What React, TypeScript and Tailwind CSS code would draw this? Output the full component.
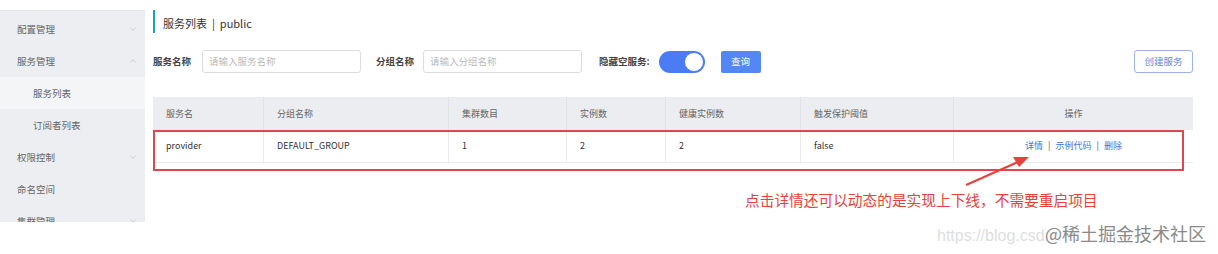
import React from "react";
import { ChevronDown, ChevronUp } from "lucide-react";

const font = { fontFamily: '"Noto Sans CJK SC", "Liberation Sans", sans-serif' };

const menu = [
    { label: "配置管理", icon: "down" },
    { label: "服务管理", icon: "up" },
    { label: "服务列表", sub: true, active: true },
    { label: "订阅者列表", sub: true },
    { label: "权限控制", icon: "down" },
    { label: "命名空间" },
    { label: "集群管理", icon: "down" },
];

const columns = [
    { title: "服务名", w: "w-[111px]" },
    { title: "分组名称", w: "w-[185px]" },
    { title: "集群数目", w: "w-[118px]" },
    { title: "实例数", w: "w-[99px]" },
    { title: "健康实例数", w: "w-[135px]" },
    { title: "触发保护阈值", w: "w-[153px]" },
];

const row = ["provider", "DEFAULT_GROUP", "1", "2", "2", "false"];

const App = () => {
    return (
        <div className="relative w-[1218px] h-[254px] bg-white flex overflow-hidden text-[#333]" style={font}>
            {/* Sidebar */}
            <aside className="w-[145px] mt-[10px] h-[212px] bg-[#eceef1] border-t border-[#e2e4e8] pt-[2px] overflow-hidden shrink-0">
                {menu.map((m) => (
                    <div
                        key={m.label}
                        className={`h-[32px] flex items-center justify-between text-[9.5px] text-[#666] pr-[7px] ${m.sub ? "pl-[33px]" : "pl-[17px]"} ${m.active ? "bg-[#f4f5f7]" : ""}`}
                    >
                        <span>{m.label}</span>
                        {m.icon === "down" && <ChevronDown size={10} strokeWidth={1.2} className="text-[#aaa]" />}
                        {m.icon === "up" && <ChevronUp size={10} strokeWidth={1.2} className="text-[#aaa]" />}
                    </div>
                ))}
            </aside>

            {/* Main */}
            <main className="flex-1 pl-[8px] pr-[25px] pt-[10px]">
                <div className="flex items-center h-[23px]">
                    <div className="w-[2px] h-[23px] bg-[#1e9bd0]" />
                    <span className="ml-[8px] text-[11px] text-[#333] mt-[3px]">服务列表 &nbsp;|&nbsp; public</span>
                </div>

                {/* Search bar */}
                <div className="flex items-center mt-[17px] h-[23px]">
                    <span className="text-[9.5px] font-bold text-[#444]">服务名称</span>
                    <div className="ml-[11px] w-[159px] h-[23px] border border-[#dcdcdc] rounded-[3px] flex items-center px-[6px] text-[9.5px] text-[#bbb]">
                        请输入服务名称
                    </div>
                    <span className="ml-[15px] text-[9.5px] font-bold text-[#444]">分组名称</span>
                    <div className="ml-[9px] w-[159px] h-[23px] border border-[#dcdcdc] rounded-[3px] flex items-center px-[6px] text-[9.5px] text-[#bbb]">
                        请输入分组名称
                    </div>
                    <span className="ml-[17px] text-[9.5px] font-bold text-[#444]">隐藏空服务:</span>
                    <div className="ml-[9px] w-[46px] h-[22px] rounded-full bg-[#4a7cf5] flex items-center justify-end pr-[1px]">
                        <div className="w-[20px] h-[20px] rounded-full bg-white border border-[#4a7cf5]" />
                    </div>
                    <div className="ml-[16px] w-[40px] h-[22px] rounded-[2px] bg-[#5287f5] text-white text-[9.5px] flex items-center justify-center">
                        查询
                    </div>
                    <div className="ml-auto w-[59px] h-[23px] rounded-[3px] border border-[#9db2ef] text-[#6a88d8] text-[9.5px] flex items-center justify-center">
                        创建服务
                    </div>
                </div>

                {/* Table */}
                <div className="relative mt-[24px] w-[1040px]">
                    <div className="flex h-[33px] bg-[#ebedf0] text-[9px] text-[#666]">
                        {columns.map((c) => (
                            <div key={c.title} className={`${c.w} flex items-center px-[13px] border-r border-[#e0e2e6]`}>
                                {c.title}
                            </div>
                        ))}
                        <div className="w-[239px] flex items-center justify-center">操作</div>
                    </div>
                    <div className="flex h-[33px] bg-white text-[9px] text-[#333] border-b border-[#ebebeb]">
                        {columns.map((c, i) => (
                            <div key={c.title} className={`${c.w} flex items-center px-[13px] border-r border-[#ebebeb]`}>
                                {row[i]}
                            </div>
                        ))}
                        <div className="w-[239px] flex items-center justify-center text-[#3b78d8]">
                            <span>详情</span>
                            <span className="mx-[5px] text-[#555]">|</span>
                            <span>示例代码</span>
                            <span className="mx-[5px] text-[#555]">|</span>
                            <span>删除</span>
                        </div>
                    </div>

                    {/* red annotation box */}
                    <div className="absolute left-0 top-[33px] w-[1031px] h-[41px] border-2 border-[#e0474c] pointer-events-none" />
                </div>

                <p className="mt-[28px] ml-[592px] text-[14.7px] leading-[18px] text-[#e8413a] whitespace-nowrap">
                    点击详情还可以动态的是实现上下线，不需要重启项目
                </p>
            </main>

            {/* arrow */}
            <svg className="absolute left-0 top-0 pointer-events-none" width="1218" height="254">
                <line x1="966" y1="185" x2="1018" y2="162" stroke="#e8413a" strokeWidth="2" />
                <polygon points="1029,157 1013,157 1019,167" fill="#e8413a" />
            </svg>

            {/* watermark */}
            <span
                className="absolute left-[937px] top-[224px] text-[16px] text-[#dedede] whitespace-nowrap"
                style={{ fontFamily: '"Liberation Sans", sans-serif' }}
            >
                https://blog.csdn.net
            </span>
            <span className="absolute left-[1045px] top-[221px] text-[18px] leading-[24px] text-[#8a8a8a] whitespace-nowrap bg-white/60">
                @稀土掘金技术社区
            </span>
        </div>
    );
};

export default App;
